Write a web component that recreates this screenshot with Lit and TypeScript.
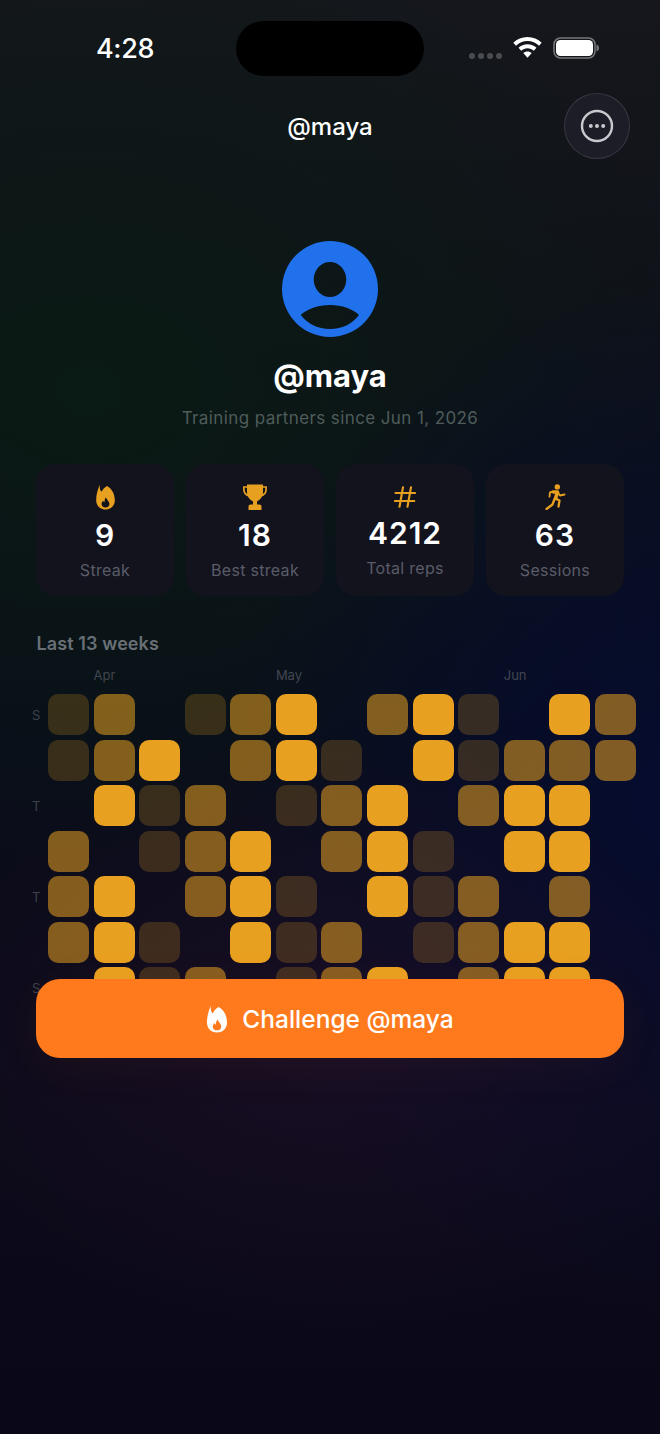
import { LitElement, html, css, svg } from 'lit';
import { customElement } from 'lit/decorators.js';

// 0 = empty, 1 = dim, 2 = mid, 3 = full. One row per weekday, 13 weeks across.
const WEEKS = [
  [1, 2, 0, 1, 2, 3, 0, 2, 3, 1, 0, 3, 2],
  [1, 2, 3, 0, 2, 3, 1, 0, 3, 1, 2, 2, 2],
  [0, 3, 1, 2, 0, 1, 2, 3, 0, 2, 3, 3, 0],
  [2, 0, 1, 2, 3, 0, 2, 3, 1, 0, 3, 3, 0],
  [2, 3, 0, 2, 3, 1, 0, 3, 1, 2, 0, 2, 0],
  [2, 3, 1, 0, 3, 1, 2, 0, 1, 2, 3, 3, 0],
  [0, 3, 1, 2, 0, 1, 2, 3, 0, 2, 3, 3, 0],
];
const DAY_LABELS = ['S', '', 'T', '', 'T', '', 'S'];
const MONTHS = [
  { label: 'Apr', column: 2 },
  { label: 'May', column: 6 },
  { label: 'Jun', column: 11 },
];

const FLAME =
  'M4 .5C3 4 4 6.500 5.500 8 6.500 5.500 8.500 3.500 11 2 15.500 4.500 19 9.500 19 16.500 19 22 15 26 9.500 26 4 26 0 22 0 16.500 0 11 1.500 5 4 .5Z' +
  'M10 13.500C10.500 16 13.500 17.500 13.500 20.500 13.500 22.800 11.800 24 9.500 24 7.200 24 5.500 22.800 5.500 20.500 5.500 19 6.300 18 7 17 7.500 18 8 18.500 8.500 18.500 8.500 16.500 9 15 10 13.500Z';

const flameIcon = (w: number, h: number) => html`
  <svg width=${w} height=${h} viewBox="0 0 19 26.5"><path fill="currentColor" fill-rule="evenodd" d=${FLAME}></path></svg>
`;

const trophyIcon = html`
  <svg width="24" height="26" viewBox="0 0 24 26">
    <path fill="currentColor" d="M4 .5h16v7.500c0 4.500-3 8.300-6 9.200V20.500h2.500c1 0 2 .8 2 2V26H5.500v-3.500c0-1.200 1-2 2-2H10v-3.300C7 16.300 4 12.500 4 8Z"></path>
    <path fill="none" stroke="currentColor" stroke-width="1.700" d="M4.500 3H.9v2.500c0 3.200 2.200 5.500 5.400 6.500M19.500 3h3.600v2.500c0 3.200-2.200 5.500-5.400 6.500"></path>
  </svg>
`;

const hashIcon = html`
  <svg width="22" height="22" viewBox="0 0 22 22" fill="none" stroke="currentColor" stroke-width="2.100" stroke-linecap="round">
    <path d="M9 1.200 5.500 20.800M17 1.200 13.500 20.800M1.500 7h19.500M.8 15h19.500"></path>
  </svg>
`;

const runnerIcon = html`
  <svg width="21" height="26" viewBox="0 0 21 26" fill="none" stroke="currentColor" stroke-linecap="round" stroke-linejoin="round">
    <circle cx="12.300" cy="2.900" r="2.700" fill="currentColor" stroke="none"></circle>
    <path stroke-width="3.600" d="M8.500 8 12.500 8 10.500 14.500"></path>
    <path stroke-width="1.900" d="M8 7.500 5 8.500 4.500 12.500M13 8.500 15 11.500 19.500 10.500"></path>
    <path stroke-width="2.300" d="M10.500 14.500 14.500 16.500 13.500 22.500M9.500 15 7.500 20.500 1.500 25"></path>
  </svg>
`;

const STATS = [
  { icon: flameIcon(19, 26), value: '9', label: 'Streak' },
  { icon: trophyIcon, value: '18', label: 'Best streak' },
  { icon: hashIcon, value: '4212', label: 'Total reps' },
  { icon: runnerIcon, value: '63', label: 'Sessions' },
];

@customElement('app-root')
export class AppRoot extends LitElement {
  static styles = css`
    :host {
      display: block;
      position: relative;
      width: 660px;
      height: 1434px;
      overflow: hidden;
      color: #fff;
      font-family: Inter, 'Liberation Sans', sans-serif;
      background:
        radial-gradient(ellipse 420px 300px at 340px 1040px, rgba(44, 18, 52, 0.36), rgba(44, 18, 52, 0) 100%),
        radial-gradient(ellipse 430px 520px at 660px 800px, #050c2e, rgba(5, 12, 46, 0) 100%),
        radial-gradient(ellipse 620px 480px at 90px 390px, #0a1a14, rgba(10, 26, 20, 0) 100%),
        linear-gradient(180deg, #15171c 0%, #0f1219 22%, #090d1a 50%, #0d0b1a 75%, #0a0818 100%);
    }
    .status {
      display: flex;
      align-items: flex-start;
      height: 93px;
      box-sizing: border-box;
      padding: 21px 0 0 96px;
    }
    .time {
      width: 140px;
      margin-top: 12px;
      font-size: 27px;
      line-height: 32px;
      font-weight: 500;
      letter-spacing: -0.35px;
    }
    .island {
      width: 188px;
      height: 55px;
      border-radius: 28px;
      background: #000;
    }
    .status-icons {
      display: flex;
      align-items: flex-start;
      gap: 11px;
      padding: 16px 0 0 45px;
    }
    .signal {
      display: flex;
      gap: 3px;
      margin-top: 16px;
    }
    .signal i {
      width: 6px;
      height: 6px;
      border-radius: 50%;
      background: #4b4c50;
    }
    .nav {
      display: flex;
      align-items: center;
      justify-content: center;
      position: relative;
      height: 66px;
      font-size: 24px;
      font-weight: 500;
    }
    .more {
      position: absolute;
      top: 0;
      right: 30px;
      display: flex;
      align-items: center;
      justify-content: center;
      box-sizing: border-box;
      width: 66px;
      height: 66px;
      border-radius: 50%;
      background: #1c1d27;
      border: 1px solid rgba(255, 255, 255, 0.12);
    }
    .profile {
      display: flex;
      flex-direction: column;
      align-items: center;
      padding-top: 82px;
    }
    .name {
      margin-top: 19px;
      font-size: 31px;
      line-height: 40px;
      font-weight: 700;
    }
    .since {
      margin-top: 10px;
      font-size: 17px;
      line-height: 24px;
      letter-spacing: 0.4px;
      color: #4f5c5b;
    }
    .stats {
      display: grid;
      grid-template-columns: repeat(4, 1fr);
      gap: 12px;
      margin: 34px 36px 0;
    }
    .stat {
      display: flex;
      flex-direction: column;
      align-items: center;
      justify-content: center;
      height: 132px;
      box-sizing: border-box;
      padding-top: 4px;
      border-radius: 20px;
      background: #13131e;
    }
    .stat-icon {
      display: flex;
      color: #e8a021;
    }
    .stat-value {
      margin-top: 6px;
      font-size: 30px;
      line-height: 38px;
      font-weight: 600;
      letter-spacing: 1px;
    }
    .stat-label {
      margin-top: 5px;
      font-size: 16px;
      line-height: 22px;
      letter-spacing: 0.3px;
      color: #5a5c68;
    }
    .history {
      padding: 0 0 0 32px;
      margin-top: 36px;
    }
    .history-title {
      margin-left: 4.5px;
      font-size: 18px;
      line-height: 24px;
      font-weight: 600;
      letter-spacing: 0.1px;
      color: #687075;
    }
    .heatmap-months {
      display: grid;
      grid-template-columns: 11.42px repeat(13, 41px);
      column-gap: 4.58px;
      height: 18px;
      margin-top: 10px;
      margin-bottom: 10px;
      font-size: 13px;
      line-height: 18px;
      color: #414652;
    }
    .heatmap-months span {
      white-space: nowrap;
    }
    .heatmap {
      display: grid;
      grid-template-columns: 11.42px repeat(13, 41px);
      grid-auto-rows: 41px;
      column-gap: 4.58px;
      row-gap: 4.58px;
    }
    .day {
      display: flex;
      align-items: center;
      font-size: 13px;
      color: #3c414b;
    }
    .cell {
      border-radius: 10px;
    }
    .l1 { background: rgba(232, 160, 33, 0.21); }
    .l2 { background: rgba(232, 160, 33, 0.55); }
    .l3 { background: #e8a021; }
    .challenge {
      position: absolute;
      top: 979px;
      left: 36px;
      display: flex;
      align-items: center;
      justify-content: center;
      gap: 14px;
      width: 588px;
      height: 79px;
      border: none;
      border-radius: 24px;
      background: #ff7a1c;
      color: #fff;
      font-family: inherit;
      font-size: 24.5px;
      font-weight: 500;
      box-shadow: 0 10px 50px rgba(255, 122, 28, 0.05);
    }
  `;

  render() {
    return html`
      <div class="status">
        <div class="time">4:28</div>
        <div class="island"></div>
        <div class="status-icons">
          <div class="signal"><i></i><i></i><i></i><i></i></div>
          ${this.renderWifi()} ${this.renderBattery()}
        </div>
      </div>
      <div class="nav">
        @maya
        <div class="more">
          <svg width="34" height="34" viewBox="0 0 34 34">
            <circle cx="17" cy="17" r="15" fill="none" stroke="#c9c9cd" stroke-width="2.400"></circle>
            <circle cx="10.800" cy="17" r="2" fill="#c9c9cd"></circle>
            <circle cx="17" cy="17" r="2" fill="#c9c9cd"></circle>
            <circle cx="23.200" cy="17" r="2" fill="#c9c9cd"></circle>
          </svg>
        </div>
      </div>
      <div class="profile">
        <svg width="96" height="96" viewBox="0 0 96 96">
          <path
            fill="#2071eb"
            fill-rule="evenodd"
            d="M48 0a48 48 0 1 0 0 96a48 48 0 1 0 0-96ZM48 21c8.800 0 16.300 7.800 16.300 17.500S56.800 56 48 56 31.700 48.200 31.700 38.500 39.200 21 48 21ZM18.700 74C25 68 36 64 48 64S71 68 77 74C70 83 60 88 48 88S26 83 18.700 74Z"
          ></path>
        </svg>
        <div class="name">@maya</div>
        <div class="since">Training partners since Jun 1, 2026</div>
      </div>
      <div class="stats">
        ${STATS.map(
          (stat) => html`
            <div class="stat">
              <div class="stat-icon">${stat.icon}</div>
              <div class="stat-value">${stat.value}</div>
              <div class="stat-label">${stat.label}</div>
            </div>
          `
        )}
      </div>
      <div class="history">
        <div class="history-title">Last 13 weeks</div>
        <div class="heatmap-months">
          ${MONTHS.map((m) => html`<span style="grid-column: ${m.column + 1}">${m.label}</span>`)}
        </div>
        <div class="heatmap">
          ${WEEKS.map(
            (row, i) => html`
              <div class="day">${DAY_LABELS[i]}</div>
              ${row.map((level) => html`<div class="cell l${level}"></div>`)}
            `
          )}
        </div>
      </div>
      <button class="challenge">${flameIcon(22, 28)}<span>Challenge @maya</span></button>
    `;
  }

  renderWifi() {
    return html`
      <svg width="29" height="21" viewBox="0 0 29 21">
        ${svg`<path fill="#fff" d="M14.500 0C9 0 4 2.200.3 5.800L3 8.700C6 5.800 10 4 14.500 4S23 5.800 26 8.700l2.700-2.900C25 2.200 20 0 14.500 0Z"></path>
        <path fill="#fff" d="M14.500 7.200c-3.500 0-6.600 1.400-9 3.600l2.700 2.900c1.700-1.500 3.900-2.500 6.300-2.500s4.600 1 6.300 2.500l2.700-2.900c-2.400-2.200-5.500-3.600-9-3.600Z"></path>
        <path fill="#fff" d="M14.500 14.400c-1.700 0-3.200.7-4.300 1.700l4.300 4.700 4.300-4.700c-1.100-1-2.600-1.700-4.300-1.700Z"></path>`}
      </svg>
    `;
  }

  renderBattery() {
    return html`
      <svg width="46" height="22" viewBox="0 0 46 22">
        <rect x="1" y="1" width="41" height="20" rx="6.500" fill="none" stroke="#77787b" stroke-width="1.500"></rect>
        <rect x="3" y="3" width="37" height="16" rx="4.500" fill="#fff"></rect>
        <path fill="#77787b" d="M43.500 7.500c1.500.4 2.500 1.800 2.500 3.500s-1 3.100-2.500 3.500Z"></path>
      </svg>
    `;
  }
}
